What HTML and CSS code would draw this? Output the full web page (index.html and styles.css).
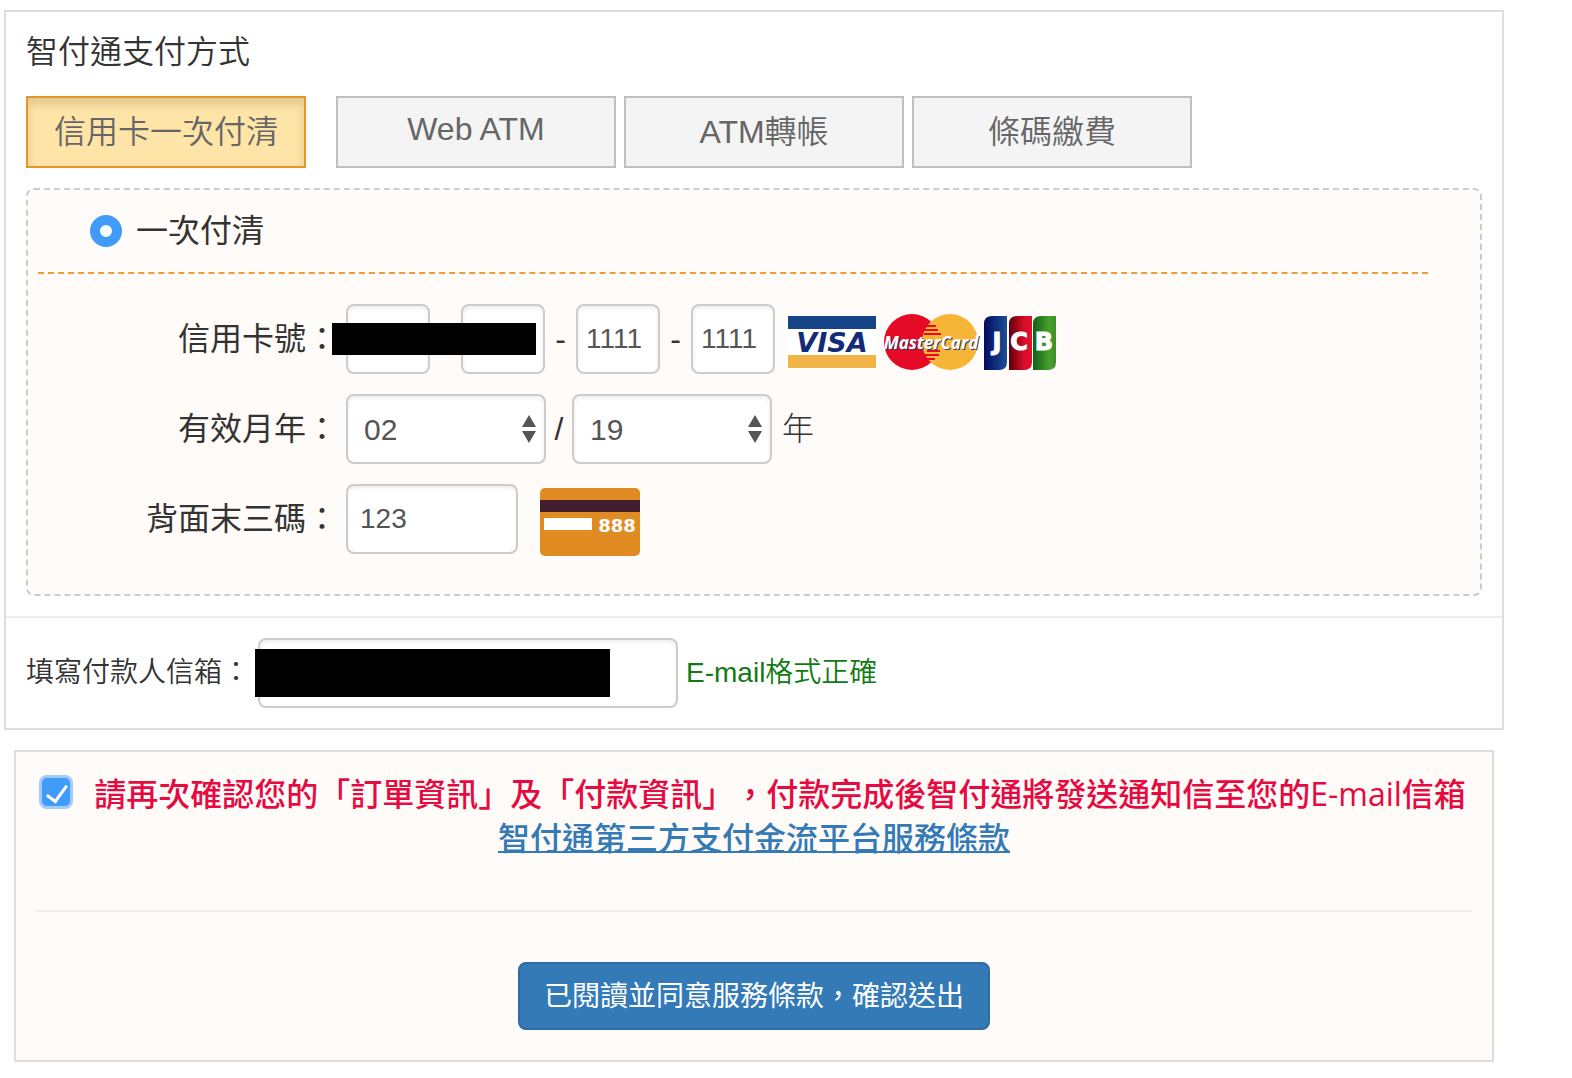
FILE: index.html
```html
<!DOCTYPE html>
<html lang="zh-Hant">
<head>
    <meta charset="UTF-8">
    <meta name="viewport" content="width=device-width, initial-scale=1.0">
    <title>智付通支付方式</title>
    <link rel="stylesheet" href="styles.css">
</head>
<body>

    <form class="page">
        <section class="panel">
            <div class="panel-body">
                <h1>智付通支付方式</h1>

                <div class="tabs">
                    <button type="button" class="tab active">信用卡一次付清</button>
                    <button type="button" class="tab">Web ATM</button>
                    <button type="button" class="tab">ATM轉帳</button>
                    <button type="button" class="tab">條碼繳費</button>
                </div>

                <div class="card-box">
                    <div class="plan">
                        <input type="radio" class="radio" id="plan-once" name="plan" checked>
                        <label for="plan-once">一次付清</label>
                    </div>

                    <div class="rows">
                        <div class="row">
                            <label class="row-label" for="card-1">信用卡號：</label>
                            <div class="card-number">
                                <input type="text" class="field card-part" id="card-1" maxlength="4">
                                <span class="dash">-</span>
                                <input type="text" class="field card-part" aria-label="信用卡號 2" maxlength="4">
                                <span class="dash">-</span>
                                <input type="text" class="field card-part" aria-label="信用卡號 3" maxlength="4" value="1111">
                                <span class="dash">-</span>
                                <input type="text" class="field card-part" aria-label="信用卡號 4" maxlength="4" value="1111">
                                <span class="mask mask-card"></span>
                            </div>
                            <svg class="brands" width="274" height="60" viewBox="0 0 274 60" aria-hidden="true">
                                <defs>
                                    <linearGradient id="jcb-blue"><stop offset="0" stop-color="#050a60"/><stop offset="1" stop-color="#1a5096"/></linearGradient>
                                    <linearGradient id="jcb-red"><stop offset="0" stop-color="#5c0008"/><stop offset="0.7" stop-color="#e00c2c"/><stop offset="1" stop-color="#d81430"/></linearGradient>
                                    <linearGradient id="jcb-green"><stop offset="0" stop-color="#126018"/><stop offset="0.7" stop-color="#48a02c"/><stop offset="1" stop-color="#3c9028"/></linearGradient>
                                </defs>
                                <!-- visa -->
                                <rect x="2" y="2" width="92" height="56" fill="#fff"/>
                                <rect x="4" y="4" width="88" height="13" fill="#154488"/>
                                <rect x="4" y="43" width="88" height="13" fill="#f3b548"/>
                                <text class="visa" x="48" y="40" text-anchor="middle">VISA</text>
                                <!-- mastercard -->
                                <circle cx="128" cy="30" r="28" fill="#e50b27"/>
                                <circle cx="166" cy="30" r="28" fill="#f6b536"/>
                                <path d="M140 14h12M138 18h16M140 22h17M143 39h13M140 43h15M139 47h12" stroke="#e50b27" stroke-width="2" fill="none"/>
                                <text class="mc mc-shadow" x="148" y="38" text-anchor="middle">MasterCard</text>
                                <text class="mc" x="147" y="37" text-anchor="middle">MasterCard</text>
                                <!-- jcb -->
                                <path d="M208 4h15v46q0 8-8 8h-15V12q0-8 8-8z" fill="url(#jcb-blue)"/>
                                <path d="M233 4h15v46q0 8-8 8h-15V12q0-8 8-8z" fill="url(#jcb-red)"/>
                                <path d="M257 4h15v46q0 8-8 8h-15V12q0-8 8-8z" fill="url(#jcb-green)"/>
                                <text class="jcb" x="213" y="38" text-anchor="middle">J</text>
                                <text class="jcb" x="235" y="38" text-anchor="middle">C</text>
                                <text class="jcb" x="260" y="38" text-anchor="middle">B</text>
                            </svg>
                        </div>

                        <div class="row">
                            <label class="row-label" for="month">有效月年：</label>
                            <span class="select-wrap">
                                <select class="field select" id="month"><option>02</option></select>
                                <svg class="arrows" width="14" height="28" viewBox="0 0 14 28" aria-hidden="true"><path d="M7 0l7 12H0zM7 28l7-12H0z" fill="#555"/></svg>
                            </span>
                            <span class="slash">/</span>
                            <span class="select-wrap">
                                <select class="field select" id="year" aria-label="有效年"><option>19</option></select>
                                <svg class="arrows" width="14" height="28" viewBox="0 0 14 28" aria-hidden="true"><path d="M7 0l7 12H0zM7 28l7-12H0z" fill="#555"/></svg>
                            </span>
                            <span class="year-unit">年</span>
                        </div>

                        <div class="row">
                            <label class="row-label" for="cvc">背面末三碼：</label>
                            <input type="text" class="field cvc" id="cvc" maxlength="3" value="123">
                            <svg class="cvc-card" width="100" height="68" viewBox="0 0 100 68" aria-hidden="true">
                                <rect width="100" height="68" rx="5" fill="#e08c23"/>
                                <rect y="12" width="100" height="12" fill="#421d2e"/>
                                <rect x="4" y="30" width="48" height="12" fill="#fff"/>
                                <text class="cvc-text" x="77" y="44" text-anchor="middle">888</text>
                            </svg>
                        </div>
                    </div>
                </div>
            </div>

            <div class="email-row">
                <label for="email">填寫付款人信箱：</label>
                <div class="email-field">
                    <input type="email" class="field email" id="email">
                    <span class="mask mask-email"></span>
                </div>
                <span class="email-ok">E-mail格式正確</span>
            </div>
        </section>

        <section class="confirm">
            <div class="agree">
                <input type="checkbox" class="checkbox" id="agree" checked>
                <label for="agree">請再次確認您的「訂單資訊」及「付款資訊」，付款完成後智付通將發送通知信至您的E-mail信箱</label>
            </div>
            <a class="terms" href="#">智付通第三方支付金流平台服務條款</a>
            <hr>
            <button type="submit" class="submit">已閱讀並同意服務條款，確認送出</button>
        </section>
    </form>

</body>
</html>
```
FILE: styles.css
```css
:root {
    --text-color: #333;
    --field-color: #555;
    --field-border: #ccc;
    --panel-border: #ddd;
    --warm-bg: #fffbf8;
    --line-color: #eee;
    --orange: #f09c38;
    --control-blue: #419bf9;
    --link-color: #337ab7;
    --notice-color: #e60a41;
}

* {
    box-sizing: border-box;
}

body {
    margin: 0;
    background-color: #fff;
    color: var(--text-color);
    font-family: "Liberation Sans", "Noto Sans CJK TC", sans-serif;
    font-size: 32px;
    line-height: 40px;
    text-spacing-trim: space-all;
}

input, select, button {
    margin: 0;
    font-family: inherit;
}

.page {
    padding: 10px 68px 16px 4px;
}

/* --- Payment panel --- */
.panel {
    border: 2px solid var(--panel-border);
}

.panel-body {
    padding: 20px;
    border-bottom: 2px solid var(--line-color);
}

h1 {
    margin: 0 0 24px;
    font-size: 32px;
    font-weight: 350;
}

.tabs {
    display: flex;
    flex-wrap: wrap;
    gap: 8px;
    margin-bottom: 20px;
}

.tab {
    width: 280px;
    height: 72px;
    padding: 0 0 6px;
    border: 2px solid #bfbfbf;
    background-color: #f4f4f4;
    color: #666;
    font-size: 32px;
    font-weight: 350;
}
.tab.active {
    margin-right: 22px;
    border-color: #e4962c;
    background-color: #fee4a6;
    box-shadow: inset 0 6px 10px rgba(0, 0, 0, 0.125);
}

.card-box {
    padding: 0 52px 40px 10px;
    border: 2px dashed #ccc;
    border-radius: 8px;
    background-color: var(--warm-bg);
}

.plan {
    display: flex;
    align-items: center;
    gap: 14px;
    height: 84px;
    padding-left: 52px;
    border-bottom: 2px dashed var(--orange);
}

.radio {
    appearance: none;
    width: 32px;
    height: 32px;
    border: 10px solid var(--control-blue);
    border-radius: 50%;
    background-color: #fff;
}

/* --- Card fields --- */
.rows {
    display: flex;
    flex-direction: column;
    gap: 20px;
    padding-top: 30px;
}

.row {
    display: flex;
    align-items: center;
    height: 70px;
}

.row-label {
    width: 300px;
    margin-right: 8px;
    text-align: right;
}

.field {
    height: 70px;
    border: 2px solid var(--field-border);
    border-radius: 8px;
    background-color: #fff;
    box-shadow: inset 0 2px 4px rgba(0, 0, 0, 0.075);
    color: var(--field-color);
    font-size: 28px;
}

.card-number {
    display: flex;
    align-items: center;
    position: relative;
}

.card-part {
    width: 84px;
    padding: 0 8px;
}

.dash {
    width: 31px;
    text-align: center;
}

.brands {
    margin: 6px 0 0 9px;
}

.visa {
    fill: #122c78;
    font: italic 700 27px "DejaVu Sans", sans-serif;
}
.mc {
    fill: #fff;
    font: italic 700 17px "Open Sans", sans-serif;
}
.mc-shadow {
    fill: #31406e;
}
.jcb {
    fill: #fff;
    font: 700 24px "DejaVu Sans", sans-serif;
    stroke: #fff;
    stroke-width: 1px;
}

.select-wrap {
    position: relative;
}

.select {
    display: block;
    appearance: none;
    width: 200px;
    padding: 0 16px;
    font-size: 30px;
}

.arrows {
    position: absolute;
    top: 21px;
    right: 10px;
    pointer-events: none;
}

.slash {
    width: 26px;
    text-align: center;
}

.year-unit {
    margin-left: 10px;
    font-weight: 300;
}

.cvc {
    width: 172px;
    padding: 0 12px;
}

.cvc-card {
    margin: 6px 0 0 22px;
}
.cvc-text {
    fill: #fff;
    font: 700 18px "DejaVu Sans", sans-serif;
}

/* Hides private values on top of the fields */
.mask {
    position: absolute;
    background-color: #000;
}
.mask-card {
    top: 19px;
    left: -14px;
    width: 204px;
    height: 32px;
}
.mask-email {
    top: 11px;
    left: -3px;
    width: 355px;
    height: 48px;
}

/* --- Payer e-mail --- */
.email-row {
    display: flex;
    align-items: center;
    gap: 8px;
    padding: 20px;
    font-size: 28px;
    font-weight: 350;
}

.email-field {
    position: relative;
}

.email {
    display: block;
    width: 420px;
    padding: 0 12px;
}

.email-ok {
    color: #117a14;
}

/* --- Confirmation --- */
.confirm {
    margin: 20px 10px 0;
    padding: 20px 20px 30px;
    border: 2px solid var(--panel-border);
    background-color: var(--warm-bg);
    font-family: "Open Sans", "Noto Sans CJK TC", sans-serif;
    font-weight: 500;
    line-height: 44px;
    text-align: center;
}

.agree {
    display: flex;
    justify-content: center;
    gap: 24px;
    color: var(--notice-color);
}

.checkbox {
    appearance: none;
    flex: none;
    position: relative;
    width: 28px;
    height: 28px;
    margin-top: 6px;
    border-radius: 5px;
    background-color: var(--control-blue);
    box-shadow: 0 0 0 3px #a0cbfa;
}
.checkbox:checked::after {
    content: '';
    position: absolute;
    top: 3px;
    left: 9px;
    width: 9px;
    height: 18px;
    border: solid #fff;
    border-width: 0 3px 3px 0;
    transform: rotate(36deg);
}

.terms {
    display: block;
    color: var(--link-color);
    text-decoration-thickness: 2px;
}

hr {
    height: 2px;
    margin: 50px 0;
    border: 0;
    background-color: var(--line-color);
}

.submit {
    height: 68px;
    padding: 0 24px 4px;
    border: 2px solid #2e6da4;
    border-radius: 8px;
    background-color: var(--link-color);
    color: #fff;
    font-size: 28px;
    vertical-align: top;
}
```
